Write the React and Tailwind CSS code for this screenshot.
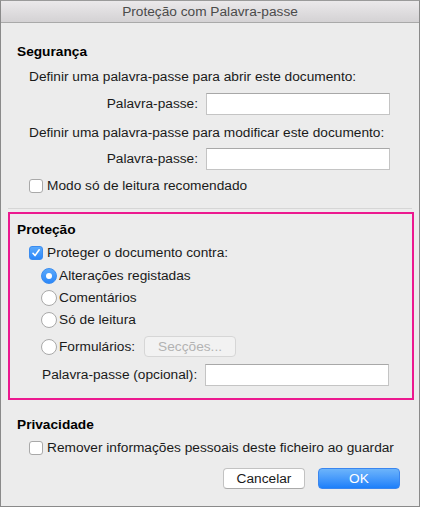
import React from "react";

const font = { fontFamily: '"Liberation Sans", Arial, sans-serif' };

function Checkbox({ checked }) {
  return checked ? (
    <div className="w-[14px] h-[14px] rounded-[3px] bg-gradient-to-b from-[#5aa9fb] to-[#2b87f9] border border-[#3a8cf0] flex items-center justify-center shrink-0">
      <svg width="10" height="10" viewBox="0 0 10 10">
        <path d="M2 5.3 L4 7.6 L8.2 1.8" fill="none" stroke="white" strokeWidth="1.6" strokeLinecap="round" strokeLinejoin="round" />
      </svg>
    </div>
  ) : (
    <div className="w-[14px] h-[14px] rounded-[3px] bg-white border border-[#a9a9a9] shrink-0" />
  );
}

function Radio({ checked }) {
  return checked ? (
    <div className="w-[16px] h-[16px] rounded-full bg-gradient-to-b from-[#5aa9fb] to-[#2b87f9] border border-[#3a8cf0] flex items-center justify-center shrink-0">
      <div className="w-[6px] h-[6px] rounded-full bg-white" />
    </div>
  ) : (
    <div className="w-[16px] h-[16px] rounded-full bg-white border border-[#a9a9a9] shrink-0" />
  );
}

function Input() {
  return <div className="w-[184px] h-[22px] bg-white border border-[#c4c4c4] border-t-[#a8a8a8]" />;
}

export default function App() {
  return (
    <div className="w-[422px] h-[508px] bg-white" style={font}>
      <div className="w-[420px] h-[507px] border border-[#8a8a8a] border-t-[#9a9a9a] bg-[#ececec] flex flex-col text-[13.7px] leading-[16px] text-[#1a1a1a]">
        <div className="h-[22px] shrink-0 bg-gradient-to-b from-[#ebe9eb] to-[#d4d2d4] border-b border-[#a9a9a9] flex items-center justify-center text-[#4b4b4b]">
          Proteção com Palavra-passe
        </div>

        <div className="pl-[16px] mt-[21px] font-bold text-black">Segurança</div>
        <div className="pl-[28px] mt-[9px]">Definir uma palavra-passe para abrir este documento:</div>
        <div className="flex items-center mt-[8px] pl-[28px]">
          <div className="w-[177px] text-right pr-[8px]">Palavra-passe:</div>
          <Input />
        </div>
        <div className="pl-[28px] mt-[10px]">Definir uma palavra-passe para modificar este documento:</div>
        <div className="flex items-center mt-[7px] pl-[28px]">
          <div className="w-[177px] text-right pr-[8px]">Palavra-passe:</div>
          <Input />
        </div>
        <div className="flex items-center gap-[4px] pl-[28px] mt-[8px]">
          <Checkbox />
          <span>Modo só de leitura recomendado</span>
        </div>

        <div className="mx-[7px] mt-[14px] h-px bg-[#d6d6d6]" />

        <div className="ml-[7px] mr-[5px] mt-[3px] h-[188px] border-2 border-[#ec198f] flex flex-col">
          <div className="pl-[7px] mt-[8px] font-bold text-black">Proteção</div>
          <div className="flex items-center gap-[4px] pl-[19px] mt-[7px]">
            <Checkbox checked />
            <span>Proteger o documento contra:</span>
          </div>
          <div className="flex items-center gap-[2px] pl-[31px] mt-[7px]">
            <Radio checked />
            <span>Alterações registadas</span>
          </div>
          <div className="flex items-center gap-[2px] pl-[31px] mt-[6px]">
            <Radio />
            <span>Comentários</span>
          </div>
          <div className="flex items-center gap-[2px] pl-[31px] mt-[6px]">
            <Radio />
            <span>Só de leitura</span>
          </div>
          <div className="flex items-center pl-[31px] mt-[8px]">
            <Radio />
            <span className="ml-[2px]">Formulários:</span>
            <div className="ml-[9px] w-[92px] h-[21px] rounded-[4px] bg-[#f2f2f2] border border-[#d6d6d6] flex items-center justify-center text-[#b3b3b3]">
              Secções...
            </div>
          </div>
          <div className="flex items-center mt-[7px] pl-[32px]">
            <span className="w-[163px]">Palavra-passe (opcional):</span>
            <Input />
          </div>
        </div>

        <div className="pl-[16px] mt-[17px] font-bold text-black">Privacidade</div>
        <div className="flex items-center gap-[4px] pl-[28px] mt-[7px]">
          <Checkbox />
          <span>Remover informações pessoais deste ficheiro ao guardar</span>
        </div>

        <div className="flex justify-end gap-[13px] pr-[19px] mt-[12px]">
          <div className="w-[82px] h-[21px] rounded-[4px] bg-white border border-[#c2c2c2] border-b-[#aaaaaa] flex items-center justify-center">
            Cancelar
          </div>
          <div className="w-[82px] h-[21px] rounded-[4px] bg-gradient-to-b from-[#6cb4fb] to-[#1b7ffa] border border-[#3a86ef] flex items-center justify-center text-white">
            OK
          </div>
        </div>
      </div>
    </div>
  );
}
